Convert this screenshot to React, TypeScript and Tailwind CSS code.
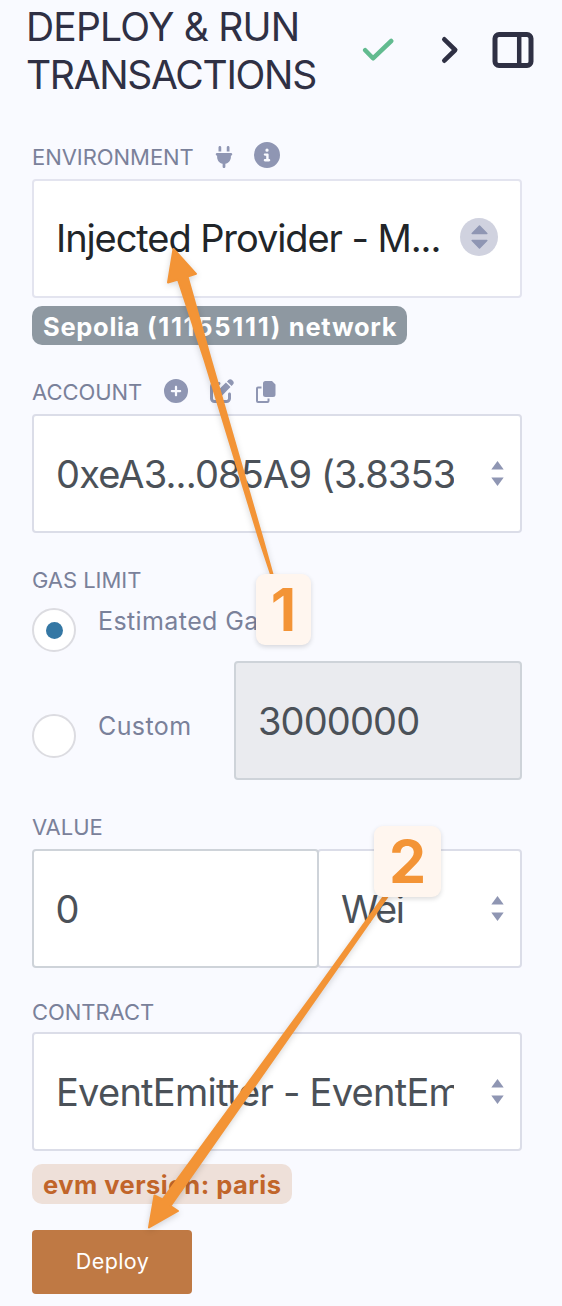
import type { ReactNode } from 'react';
import { FaPlug, FaCircleInfo, FaCirclePlus, FaPenToSquare } from 'react-icons/fa6';

function Label({ children, className }: { children: ReactNode; className: string }) {
  return <span className={`whitespace-nowrap text-[22px] leading-[24px] tracking-[-0.05px] text-[#7a819a] ${className}`}>{children}</span>;
}

function Carets() {
  return (
    <svg className="h-[25px] w-[13px] shrink-0" viewBox="0 0 13 25" fill="#8f96b3">
      <path d="M6.5 0 12.7 8.5H.3Z" />
      <path d="M.3 16.5H12.7L6.5 25Z" />
    </svg>
  );
}

function CopyIcon() {
  return (
    <svg className="ml-[22px] mt-[3px] h-[22px] w-[20px]" viewBox="0 0 20 22" fill="#8f96b3">
      <path d="M9.500 0H16L19.500 3.500V13.500A2.500 2.500 0 0 1 17 16H9.500A2.500 2.500 0 0 1 7 13.500V2.500A2.500 2.500 0 0 1 9.500 0Z" />
      <path d="M2 5.500H5.500V7.500H2V20H11.500V17.500H13.500V20A2 2 0 0 1 11.500 22H2A2 2 0 0 1 0 20V7.500A2 2 0 0 1 2 5.500Z" />
    </svg>
  );
}

function Select({ text, className, textClass }: { text: string; className: string; textClass: string }) {
  return (
    <div className={`flex h-[119px] items-center justify-between rounded-[4px] border-2 border-[#dbdde8] bg-white pl-[22px] pr-[16px] ${className}`}>
      <span className={`overflow-hidden whitespace-nowrap text-[38px] leading-[50px] text-[#4b5158] ${textClass}`}>{text}</span>
      <Carets />
    </div>
  );
}

function Radio({ checked = false }: { checked?: boolean }) {
  return (
    <span className="flex size-[44px] shrink-0 items-center justify-center rounded-full border-2 border-[#dcdce1] bg-white">
      {checked && <span className="size-[17px] rounded-full bg-[#3477a4]" />}
    </span>
  );
}

function Annotations() {
  return (
    <>
      <svg
        className="pointer-events-none absolute left-0 top-0 h-[1306px] w-[562px] drop-shadow-[0_2px_3px_rgba(0,0,0,0.16)]"
        viewBox="0 0 562 1306"
        fill="#f39436"
        stroke="#f39436"
        strokeLinejoin="round"
      >
        <path strokeWidth="2" d="M173.5 249 196 273.8 187.5 276.500 211 360 263 540 273 576H271.5L259.5 540 204.5 360 178 279.500 168 282.500Z" />
        <path strokeWidth="2" d="M149 1227.500 178 1211 170.500 1206 322 990 388 896H384L317 989 162.500 1199.500 154.500 1195.500Z" />
      </svg>
      <span className="absolute left-[256px] top-[574px] flex h-[71px] w-[55px] items-center justify-center rounded-[9px] bg-[#fff6ef] text-[59px] font-bold leading-none text-[#f39436] shadow-[0_2px_5px_rgba(0,0,0,0.14)]">
        1
      </span>
      <span className="absolute left-[374px] top-[826px] flex h-[71px] w-[67px] items-center justify-center rounded-[9px] bg-[#fff6ef] text-[59px] font-bold leading-none text-[#f39436] shadow-[0_2px_5px_rgba(0,0,0,0.14)]">
        2
      </span>
    </>
  );
}

export default function App() {
  return (
    <main className="relative h-[1306px] w-[562px] overflow-hidden bg-[#f9faff] font-['Inter',sans-serif]">
      <header className="flex h-[98px] items-start">
        <h1 className="w-[336px] shrink-0 whitespace-nowrap pl-[26px] pt-[3px] text-[39px] leading-[48px] text-[#2f3044]">
          <span className="block tracking-[-0.8px]">DEPLOY &amp; RUN</span>
          <span className="block tracking-[-1.300px]">TRANSACTIONS</span>
        </h1>
        <svg className="ml-[26px] mt-[38px] h-[24px] w-[32px]" viewBox="0 0 32 24" fill="none" stroke="#62bb90" strokeWidth="4.500" strokeLinecap="round" strokeLinejoin="round">
          <path d="M3.200 12.200 11 20.300 29.200 3" />
        </svg>
        <svg className="ml-[46px] mt-[36px] h-[28px] w-[20px]" viewBox="0 0 20 28" fill="none" stroke="#2f3044" strokeWidth="4.600" strokeLinecap="round" strokeLinejoin="round">
          <path d="M4.300 3.300 15.200 14 4.300 24.700" />
        </svg>
        <svg className="ml-[32px] mt-[31px] h-[38px] w-[42px]" viewBox="0 0 42 38">
          <rect x="3" y="3.500" width="36" height="31" rx="4" fill="none" stroke="#2f3044" strokeWidth="5" />
          <path d="M27.200 4v30" stroke="#2f3044" strokeWidth="4.500" />
        </svg>
      </header>

      <div className="flex flex-col pl-[32px] pr-[40px]">
        <section className="mt-[45px]">
          <div className="flex h-[36px] items-start">
            <Label className="mt-[2px] w-[182px]">ENVIRONMENT</Label>
            <FaPlug className="mt-[3px] h-[22px] w-[20px] text-[#8f96b3]" />
            <FaCircleInfo className="ml-[20px] -mt-[1px] size-[26px] text-[#8f96b3]" />
          </div>
          <div className="flex h-[119px] items-center justify-between rounded-[4px] border-2 border-[#e3e4ef] bg-white pb-[2px] pl-[22px] pr-[22px]">
            <span className="whitespace-nowrap text-[38px] leading-[50px] tracking-[-1.080px] text-[#212529]">Injected Provider - M...</span>
            <span className="mb-px flex size-[38px] shrink-0 items-center justify-center rounded-full bg-[#d0d2df]">
              <svg className="h-[24px] w-[17px]" viewBox="0 0 17 24" fill="#8f96b3" stroke="#8f96b3" strokeWidth="1.500" strokeLinejoin="round">
                <path d="M8.500 1 15.800 8.500H1.200Z" />
                <path d="M1.200 15.500H15.800L8.500 23Z" />
              </svg>
            </span>
          </div>
          <div className="mt-[8px] flex h-[39px] w-[375px] items-center whitespace-pre rounded-[10px] bg-[#8e98a1] pl-[11px] pt-[2px] text-[25.500px] font-bold leading-none tracking-[0.700px] text-white">
            <span>Sepolia </span>
            <span className="tracking-[1.700px]">(11155111)</span>
            <span> network</span>
          </div>
        </section>

        <section className="mt-[33px]">
          <div className="flex h-[36px] items-start">
            <Label className="mt-[2px] w-[132px]">ACCOUNT</Label>
            <FaCirclePlus className="mt-[1px] size-[24px] text-[#8f96b3]" />
            <FaPenToSquare className="ml-[22px] mt-[1px] size-[24px] text-[#8f96b3]" />
            <CopyIcon />
          </div>
          <Select text="0xeA3...085A9 (3.8353" className="" textClass="w-[398px] tracking-[-0.820px]" />
        </section>

        <section className="mt-[35px]">
          <Label className="block">GAS LIMIT</Label>
          <div className="mt-[16px] flex h-[53px] items-start">
            <Radio checked />
            <span className="-mt-[1px] ml-[22px] whitespace-nowrap text-[25px] leading-[28px] tracking-[0.4px] text-[#7a819a]">Estimated Gas</span>
          </div>
          <div className="flex h-[119px] items-start">
            <span className="mt-[53px] flex"><Radio /></span>
            <span className="ml-[22px] mt-[51px] w-[136px] text-[25px] leading-[28px] tracking-[0.4px] text-[#7a819a]">Custom</span>
            <div className="flex h-[119px] w-[288px] items-center rounded-[4px] border-2 border-[#ced3d9] bg-[#eaebef] pl-[22px] pt-[1px] text-[38px] leading-none tracking-[-0.850px] text-[#4b5158]">
              3000000
            </div>
          </div>
        </section>

        <section className="mt-[35px]">
          <Label className="block">VALUE</Label>
          <div className="mt-[10px] flex">
            <div className="z-10 flex h-[119px] w-[287px] shrink-0 items-center rounded-[4px] border-2 border-[#ced3d9] bg-white pl-[21.500px] pt-[2px] text-[38px] text-[#4b5158]">0</div>
            <Select text="Wei" className="-ml-[2px] w-[205px]" textClass="tracking-[-1.400px]" />
          </div>
        </section>

        <section className="mt-[32px]">
          <Label className="block">CONTRACT</Label>
          <div className="mt-[8px]">
            <Select text="EventEmitter - EventEmitter" className="" textClass="w-[398px] tracking-[-0.740px]" />
          </div>
          <div className="mt-[13px] flex h-[40px] w-[260px] items-center whitespace-nowrap rounded-[10px] bg-[#eee0d9] pl-[11px] pt-[2px] text-[25.500px] font-bold leading-none tracking-[0.480px] text-[#c1652a]">
            evm version: paris
          </div>
          <button className="mt-[26px] flex h-[64px] w-[160px] items-center justify-center rounded-[4px] bg-[#bf7944] pb-[2px] pl-[1px] text-[21.500px] tracking-[0.400px] text-white">
            Deploy
          </button>
        </section>
      </div>
      <Annotations />
    </main>
  );
}
